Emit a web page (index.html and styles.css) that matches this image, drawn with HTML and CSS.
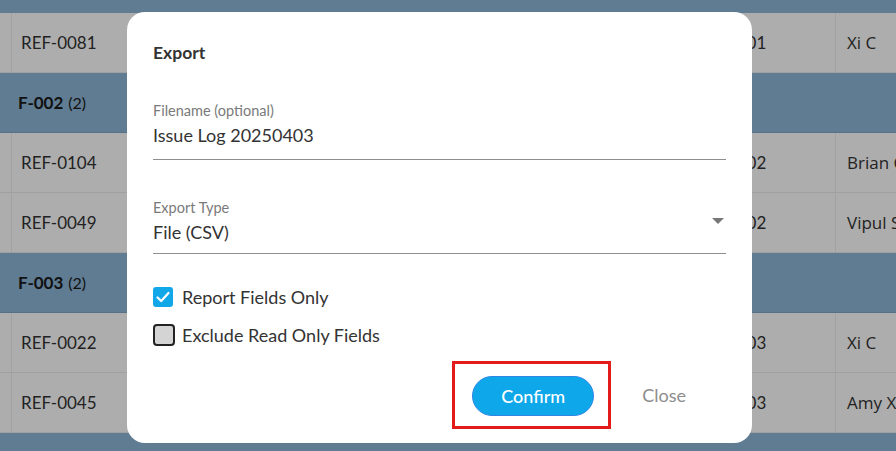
FILE: index.html
```html
<!DOCTYPE html>
<html>

<head>
    <meta charset="utf-8">
    <title>Issue Log - Export</title>
    <link rel="stylesheet" href="styles.css">
</head>

<body>

    <div class="table">
        <div class="strip"></div>
        <div class="row">
            <div class="cell edge"></div>
            <div class="cell">REF-0081</div>
            <div class="cell"></div>
            <div class="cell">F-001</div>
            <div class="cell name">Xi C</div>
        </div>
        <div class="group"><b>F-002</b> <span>(2)</span></div>
        <div class="row">
            <div class="cell edge"></div>
            <div class="cell">REF-0104</div>
            <div class="cell"></div>
            <div class="cell">F-002</div>
            <div class="cell name">Brian C</div>
        </div>
        <div class="row">
            <div class="cell edge"></div>
            <div class="cell">REF-0049</div>
            <div class="cell"></div>
            <div class="cell">F-002</div>
            <div class="cell name">Vipul S</div>
        </div>
        <div class="group"><b>F-003</b> <span>(2)</span></div>
        <div class="row">
            <div class="cell edge"></div>
            <div class="cell">REF-0022</div>
            <div class="cell"></div>
            <div class="cell">F-003</div>
            <div class="cell name">Xi C</div>
        </div>
        <div class="row">
            <div class="cell edge"></div>
            <div class="cell">REF-0045</div>
            <div class="cell"></div>
            <div class="cell">F-003</div>
            <div class="cell name">Amy X</div>
        </div>
    </div>

    <div class="modal">
        <h1 class="title">Export</h1>

        <div class="field">
            <div class="label">Filename (optional)</div>
            <div class="value">Issue Log 20250403</div>
        </div>

        <div class="field select">
            <div>
                <div class="label">Export Type</div>
                <div class="value">File (CSV)</div>
            </div>
            <span class="caret"></span>
        </div>

        <div class="checks">
            <label class="check">
                <span class="box on">
                    <svg width="16" height="16" viewBox="0 0 16 16">
                        <path d="M2.5 8.5 L6.2 12 L13.5 4" fill="none" stroke="#fff" stroke-width="2.2" stroke-linecap="round" stroke-linejoin="round"/>
                    </svg>
                </span>
                Report Fields Only
            </label>
            <label class="check">
                <span class="box"></span>
                Exclude Read Only Fields
            </label>
        </div>

        <div class="footer">
            <span class="highlight">
                <button class="confirm">Confirm</button>
            </span>
            <button class="close">Close</button>
        </div>
    </div>

</body>

</html>
```

FILE: styles.css
```css
body {
    margin: 0;
    background-color: #5f7c92;
    font-family: 'Lato', 'Noto Sans', sans-serif;
    color: #222;
    height: 451px;
    overflow: hidden;
}

.strip {
    height: 13px;
    background-color: #5f7c92;
}

.row {
    display: grid;
    grid-template-columns: 12px 240px 1fr 124px 60px;
    height: 60px;
    background-color: #adadad;
    border-bottom: 1px solid #a0a0a0;
    box-sizing: border-box;
}

.cell {
    display: flex;
    align-items: center;
    padding-left: 9px;
    font-size: 17px;
    border-right: 1px solid #a1a1a1;
    white-space: nowrap;
    overflow: hidden;
}

.cell.edge {
    padding: 0;
}

.cell.name {
    padding-left: 11px;
    border-right: none;
    font-family: 'Open Sans', sans-serif;
    font-size: 17px;
}

.group {
    height: 60px;
    display: flex;
    align-items: center;
    gap: 5px;
    padding-left: 18px;
    font-size: 17px;
    color: #111;
    border-bottom: 1px solid #56728a;
    box-sizing: border-box;
}

.group span {
    font-size: 16px;
}

/* dialog */
.modal {
    position: absolute;
    left: 127px;
    top: 12px;
    width: 625px;
    height: 431px;
    box-sizing: border-box;
    background-color: #fff;
    border-radius: 18px;
    padding: 31px 26px 14px 26px;
    display: flex;
    flex-direction: column;
    color: #333;
}

.title {
    margin: 0;
    font-size: 17.5px;
    line-height: 20px;
    font-weight: 700;
}

.field {
    margin-top: 40px;
    border-bottom: 1px solid #8e8e8e;
    padding-bottom: 12px;
}

.label {
    font-size: 14.5px;
    line-height: 16px;
    color: #7a7a7a;
}

.value {
    margin-top: 4px;
    font-size: 18px;
    line-height: 24px;
    color: #333;
}

.select {
    display: flex;
    justify-content: space-between;
    align-items: center;
    padding-bottom: 9px;
}

.caret {
    width: 0;
    height: 0;
    border-left: 6px solid transparent;
    border-right: 6px solid transparent;
    border-top: 6px solid #777;
    margin-right: 2px;
    margin-bottom: 2px;
}

.checks {
    margin-top: 31px;
    display: flex;
    flex-direction: column;
    gap: 14px;
}

.check {
    display: flex;
    align-items: center;
    gap: 7px;
    height: 24px;
    font-size: 18px;
    color: #333;
}

.box {
    width: 22px;
    height: 22px;
    box-sizing: border-box;
    border: 2px solid #222;
    border-radius: 4px;
    background-color: #d4d4d4;
    display: flex;
    align-items: center;
    justify-content: center;
}

.box.on {
    width: 20px;
    height: 20px;
    margin-right: 2px;
    border: none;
    border-radius: 3px;
    background-color: #12a7e8;
}

.footer {
    margin-top: auto;
    display: flex;
    justify-content: flex-end;
    align-items: center;
    gap: 7px;
}

.highlight {
    border: 3px solid #e31b1b;
    padding: 12px 14px 10px 17px;
    display: flex;
}

.confirm {
    width: 122px;
    height: 40px;
    border-radius: 20px;
    border: 1px solid #2f86e4;
    background-color: #0ea8ea;
    color: #fff;
    font-family: inherit;
    font-size: 18px;
    font-weight: 500;
}

.close {
    background: none;
    border: none;
    padding: 0 40px 0 24px;
    font-family: inherit;
    font-size: 18px;
    color: #8d8d8d;
}
```
